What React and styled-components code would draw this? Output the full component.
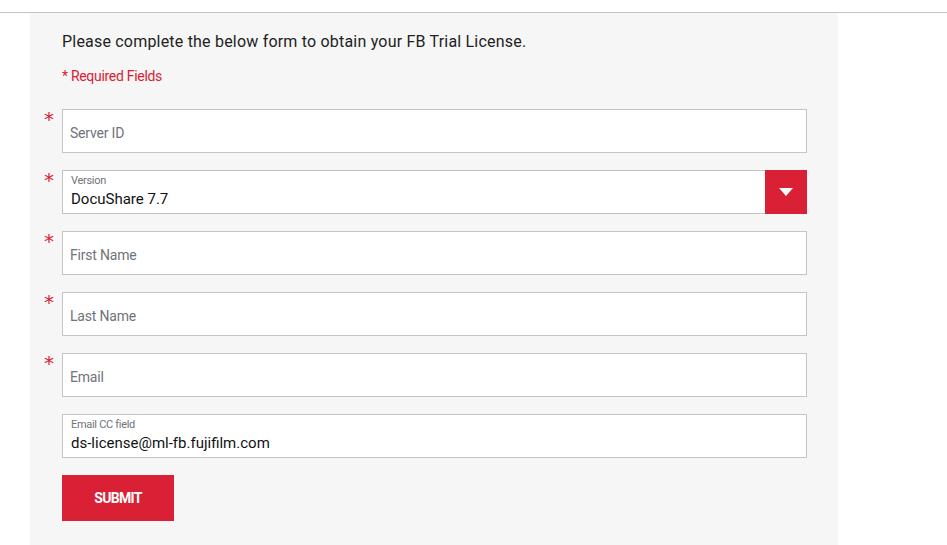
import React from "react";
import styled, { createGlobalStyle } from "styled-components";

const Global = createGlobalStyle`
  html, body { margin: 0; padding: 0; background: #fff; }
  body { font-family: Roboto, "Liberation Sans", sans-serif; }
`;

const RED = "#d92034";

const Page = styled.div`
  padding-top: 12px;
  height: 545px;
  box-sizing: border-box;
  overflow: hidden;
`;

const Rule = styled.div`
  border-top: 1px solid #c4c4c4;
  padding-left: 30px;
`;

const Panel = styled.div`
  width: 808px;
  background: #f6f6f6;
  box-sizing: border-box;
  padding: 18px 32px 22px 32px;
  min-height: 540px;
`;

const Intro = styled.p`
  margin: 0;
  font-size: 16px;
  line-height: 22px;
  color: #222;
  letter-spacing: 0.2px;
`;

const Required = styled.p`
  margin: 14px 0 0 0;
  font-size: 14px;
  line-height: 18px;
  color: ${RED};
  letter-spacing: -0.3px;
`;

const Form = styled.form`
  margin-top: 24px;
  display: flex;
  flex-direction: column;
  gap: 17px;
`;

const Row = styled.div`
  position: relative;
  display: flex;
`;

const Star = styled.span`
  position: absolute;
  left: -18px;
  top: 0;
  color: ${RED};
  font-size: 20px;
  line-height: 20px;
  font-family: "DejaVu Sans", sans-serif;
`;

const Box = styled.div`
  flex: 0 0 745px;
  height: 44px;
  box-sizing: border-box;
  border: 1px solid #c4c4c4;
  background: #fff;
  display: flex;
  align-items: stretch;
`;

const Field = styled.div`
  flex: 1;
  display: flex;
  flex-direction: column;
  justify-content: ${(p) => (p.$filled ? "flex-start" : "center")};
  padding: ${(p) => (p.$filled ? "3px 8px 0 8px" : "4px 7px 0 7px")};
`;

const Placeholder = styled.span`
  font-size: 14px;
  color: #6f737a;
  letter-spacing: -0.2px;
`;

const Label = styled.span`
  font-size: 11px;
  line-height: 13px;
  color: #6f737a;
  letter-spacing: -0.3px;
`;

const Value = styled.span`
  margin-top: 2px;
  font-size: 15px;
  line-height: 21px;
  color: #111;
`;

const DropBtn = styled.div`
  width: 42px;
  background: ${RED};
  display: flex;
  align-items: center;
  justify-content: center;
  margin: -1px -1px -1px 0;
`;

const Submit = styled.button`
  width: 112px;
  height: 46px;
  border: none;
  background: ${RED};
  color: #fff;
  font-family: Roboto, sans-serif;
  font-weight: 700;
  font-size: 14px;
  letter-spacing: -0.7px;
  cursor: pointer;
`;

const fields = [
  { req: true, ph: "Server ID" },
  { req: true, label: "Version", value: "DocuShare 7.7", select: true },
  { req: true, ph: "First Name" },
  { req: true, ph: "Last Name" },
  { req: true, ph: "Email" },
  { req: false, label: "Email CC field", value: "ds-license@ml-fb.fujifilm.com" },
];

export default function App() {
  return (
    <>
      <Global />
      <Page>
        <Rule>
          <Panel>
            <Intro>Please complete the below form to obtain your FB Trial License.</Intro>
            <Required>* Required Fields</Required>
            <Form onSubmit={(e) => e.preventDefault()}>
              {fields.map((f, i) => (
                <Row key={i}>
                  {f.req && <Star>*</Star>}
                  <Box>
                    {f.value ? (
                      <Field $filled>
                        <Label>{f.label}</Label>
                        <Value>{f.value}</Value>
                      </Field>
                    ) : (
                      <Field>
                        <Placeholder>{f.ph}</Placeholder>
                      </Field>
                    )}
                    {f.select && (
                      <DropBtn>
                        <svg width="14" height="8" viewBox="0 0 14 8">
                          <path d="M0 0 H14 L7 8 Z" fill="#fff" />
                        </svg>
                      </DropBtn>
                    )}
                  </Box>
                </Row>
              ))}
              <div>
                <Submit type="submit">SUBMIT</Submit>
              </div>
            </Form>
          </Panel>
        </Rule>
      </Page>
    </>
  );
}
